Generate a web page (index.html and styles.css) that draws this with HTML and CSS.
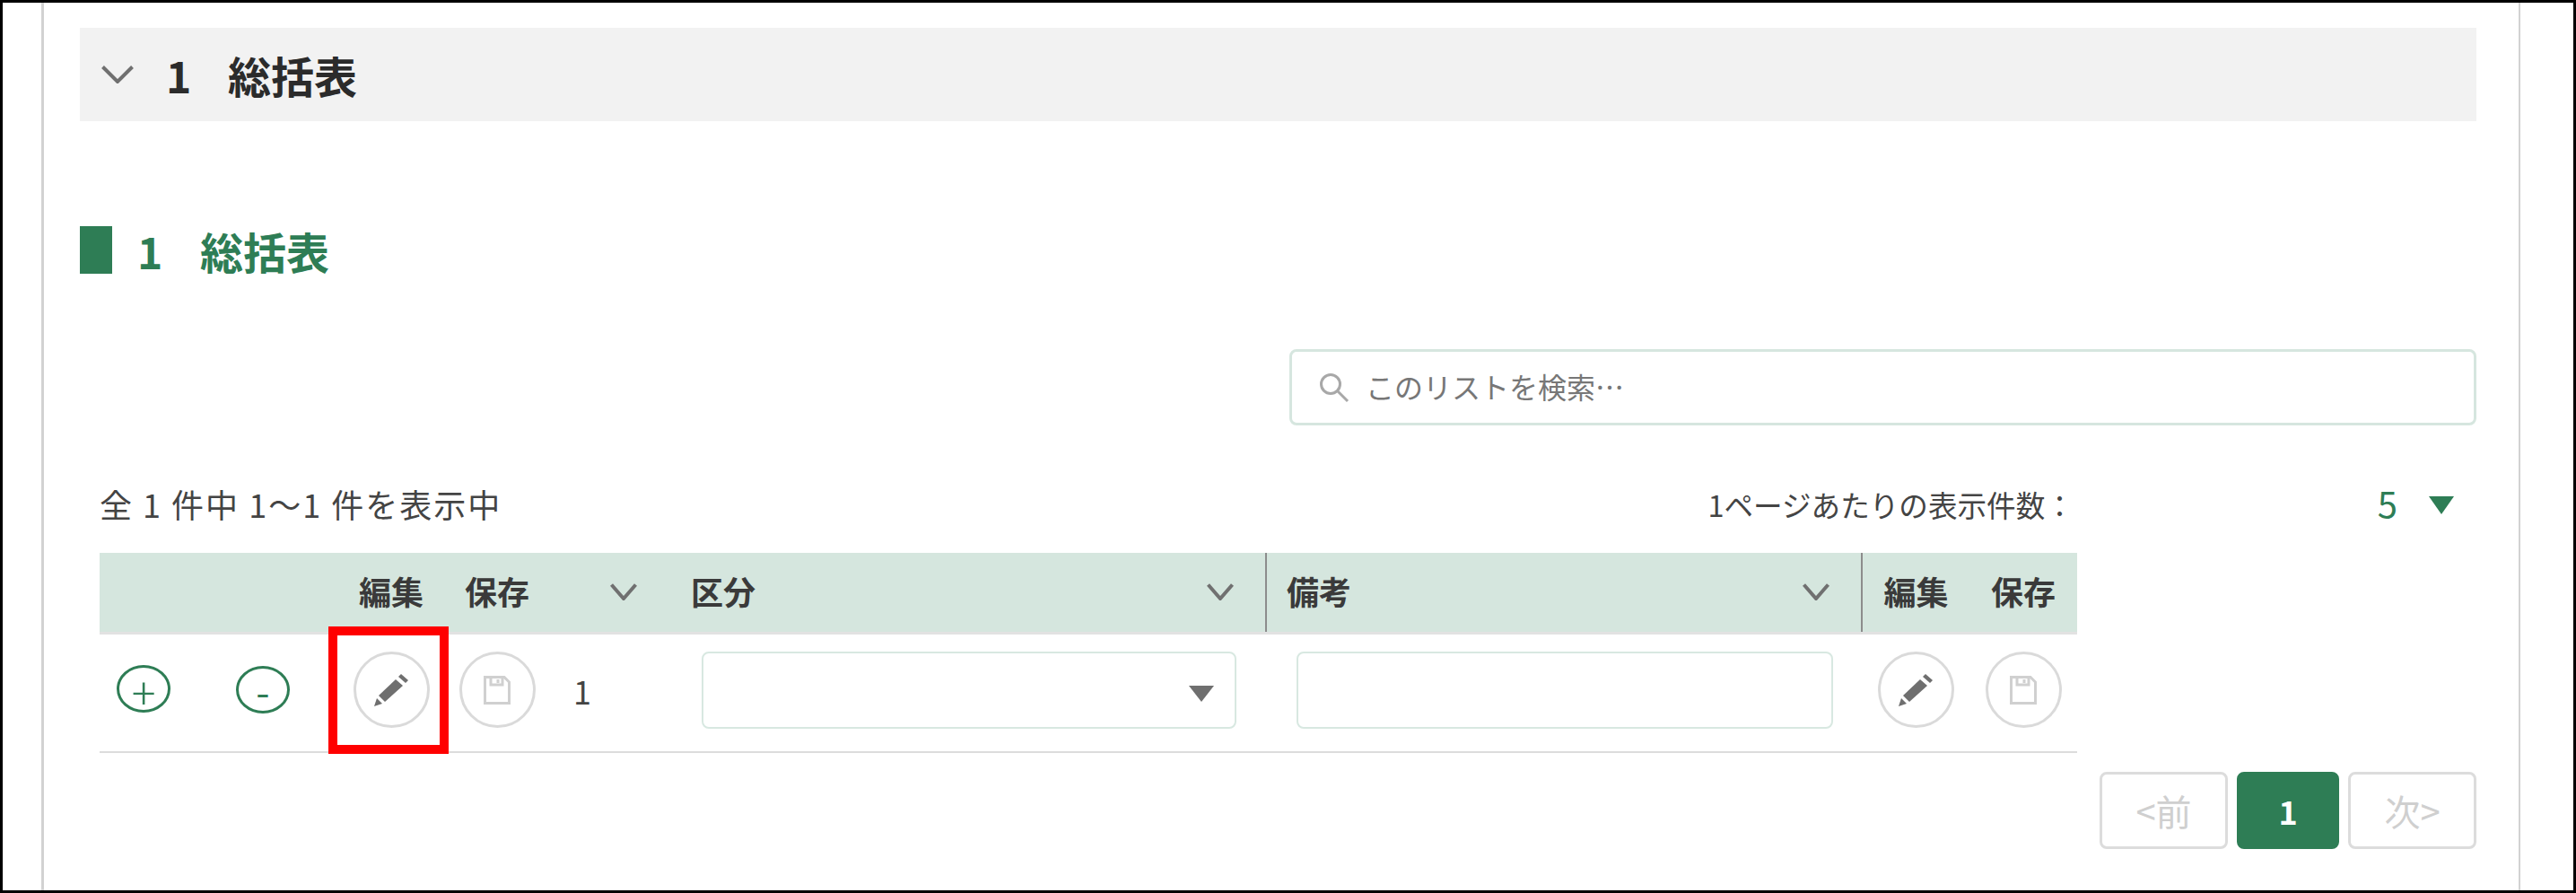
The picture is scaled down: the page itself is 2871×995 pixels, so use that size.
FILE: index.html
```html
<!DOCTYPE html>
<html>
<head>
    <title>総括表</title>
    <link rel="stylesheet" href="styles.css">
</head>
<body>
    <div class="frame">
        <div class="page">
            <div class="band">
                <svg class="band-chevron" viewBox="0 0 36 20"><polyline points="1.5,1.5 18,18 34.5,1.5" /></svg>
                <span class="band-no">1</span>
                <span>総括表</span>
            </div>

            <div class="section-head">
                <span class="section-bar"></span>
                <span class="section-no">1</span>
                <span>総括表</span>
            </div>

            <div class="search-box">
                <svg class="search-icon" viewBox="0 0 34 34"><circle cx="13" cy="13" r="10.5" /><line x1="21" y1="21" x2="32" y2="32" /></svg>
                <span class="search-text">このリストを検索…</span>
            </div>

            <div class="info-row">
                <div class="count">全 1 件中 1～1 件を表示中</div>
                <div class="per-label">1ページあたりの表示件数：</div>
                <div class="per-size">5</div>
                <span class="per-arrow"></span>
            </div>

            <table class="list">
                <colgroup>
                    <col class="col-add">
                    <col class="col-del">
                    <col class="col-btn">
                    <col class="col-btn">
                    <col class="col-no">
                    <col class="col-kubun">
                    <col class="col-note">
                    <col class="col-btn2">
                    <col class="col-btn2">
                </colgroup>
                <thead>
                    <tr>
                        <th></th>
                        <th></th>
                        <th class="center">編集</th>
                        <th class="center">保存</th>
                        <th>
                            <div class="th-inner th-end">
                                <svg class="th-chevron" viewBox="0 0 30 19"><polyline points="1.5,1.5 15,17 28.5,1.5" /></svg>
                            </div>
                        </th>
                        <th>
                            <div class="th-inner">
                                <span>区分</span>
                                <svg class="th-chevron" viewBox="0 0 30 19"><polyline points="1.5,1.5 15,17 28.5,1.5" /></svg>
                            </div>
                        </th>
                        <th class="divided">
                            <div class="th-inner">
                                <span>備考</span>
                                <svg class="th-chevron" viewBox="0 0 30 19"><polyline points="1.5,1.5 15,17 28.5,1.5" /></svg>
                            </div>
                        </th>
                        <th class="center divided">編集</th>
                        <th class="center">保存</th>
                    </tr>
                </thead>
                <tbody>
                    <tr>
                        <td class="center"><button class="ring ring-plus">+</button></td>
                        <td class="center"><button class="ring ring-minus">-</button></td>
                        <td class="center marked">
                            <button class="round">
                                <svg class="pencil" viewBox="0 0 38 36">
                                    <polygon points="0,36 3,27 9,33" />
                                    <polygon points="5,24 24,6 32,13 12,31" />
                                    <polygon points="27,3 30,0 38,7 35,10" />
                                </svg>
                            </button>
                            <span class="red-box"></span>
                        </td>
                        <td class="center">
                            <button class="round">
                                <svg class="floppy" viewBox="0 0 30 32">
                                    <path d="M1.5 1.5H23L28.5 7V30.5H1.5Z" />
                                    <path d="M8 2V10H21V2M16 4V8" />
                                </svg>
                            </button>
                        </td>
                        <td class="row-no">1</td>
                        <td class="field-kubun">
                            <div class="field">
                                <span class="select-arrow"></span>
                            </div>
                        </td>
                        <td class="field-note">
                            <div class="field"></div>
                        </td>
                        <td class="center">
                            <button class="round">
                                <svg class="pencil" viewBox="0 0 38 36">
                                    <polygon points="0,36 3,27 9,33" />
                                    <polygon points="5,24 24,6 32,13 12,31" />
                                    <polygon points="27,3 30,0 38,7 35,10" />
                                </svg>
                            </button>
                        </td>
                        <td class="center">
                            <button class="round">
                                <svg class="floppy" viewBox="0 0 30 32">
                                    <path d="M1.5 1.5H23L28.5 7V30.5H1.5Z" />
                                    <path d="M8 2V10H21V2M16 4V8" />
                                </svg>
                            </button>
                        </td>
                    </tr>
                </tbody>
            </table>

            <div class="pager">
                <div class="pager-item">&lt;前</div>
                <div class="pager-item current">1</div>
                <div class="pager-item">次&gt;</div>
            </div>
        </div>
    </div>
</body>
</html>
```

FILE: styles.css
```css
html, body {
    margin: 0;
    padding: 0;
}
body {
    font-family: "Noto Sans CJK JP", "Noto Sans", sans-serif;
    color: #333;
    background-color: #fff;
}
.frame {
    width: 2871px;
    height: 995px;
    box-sizing: border-box;
    border: 3px solid #000;
    padding-left: 43px;
    overflow: hidden;
}
.page {
    width: 2763px;
    height: 100%;
    box-sizing: border-box;
    border-left: 3px solid #d2d2d2;
    border-right: 2px solid #d2d2d2;
    padding: 28px 47px 0 40px;
}

.band {
    display: flex;
    align-items: center;
    height: 104px;
    padding-left: 24px;
    background-color: #f2f2f2;
    font-size: 48px;
    font-weight: bold;
    color: #2b2b2b;
}
.band-chevron {
    width: 36px;
    height: 20px;
    margin-right: 36px;
}
.band-chevron polyline {
    fill: none;
    stroke: #707070;
    stroke-width: 4;
}
.band-no {
    width: 69px;
}

.section-head {
    display: flex;
    align-items: center;
    height: 53px;
    margin-top: 117px;
    font-size: 48px;
    font-weight: bold;
    color: #2e7d55;
}
.section-bar {
    width: 36px;
    height: 53px;
    margin-right: 28px;
    background-color: #2e7d55;
}
.section-no {
    width: 70px;
}

.search-box {
    display: flex;
    align-items: center;
    width: 1323px;
    height: 85px;
    box-sizing: border-box;
    margin: 84px 0 0 auto;
    padding-left: 30px;
    border: 3px solid #d6e6df;
    border-radius: 8px;
    font-size: 32px;
    color: #777;
}
.search-icon {
    width: 34px;
    height: 34px;
    margin-right: 18px;
}
.search-icon circle,
.search-icon line {
    fill: none;
    stroke: #a8a8a8;
    stroke-width: 3;
}
.search-text {
    padding-bottom: 4px;
}

.info-row {
    display: flex;
    align-items: center;
    height: 36px;
    margin-top: 69px;
    padding-left: 22px;
    font-size: 36px;
    letter-spacing: 2px;
    color: #444;
}
.count {
    flex: 1;
}
.per-label {
    font-size: 32.6px;
    letter-spacing: 0;
}
.per-size {
    margin-left: 338px;
    padding-bottom: 3px;
    font-size: 40px;
    letter-spacing: 0;
    color: #2e7d55;
}
.per-arrow {
    width: 0;
    height: 0;
    margin: 4px 25px 0 35px;
    border-left: 14px solid transparent;
    border-right: 14px solid transparent;
    border-top: 20px solid #2e7d55;
}

.list {
    width: 2204px;
    margin: 37px 0 0 22px;
    border-collapse: collapse;
    table-layout: fixed;
}
.col-add { width: 98px; }
.col-del { width: 168px; }
.col-btn { width: 118px; }
.col-no { width: 139px; }
.col-kubun { width: 659px; }
.col-note { width: 664px; }
.col-btn2 { width: 120px; }

.list th {
    height: 89px;
    box-sizing: border-box;
    padding: 0 0 4px 0;
    background-color: #d5e6de;
    border-bottom: 3px solid #e2e2e2;
    font-size: 36px;
    font-weight: bold;
    color: #3a3a3a;
    text-align: left;
}
.list th.center,
.list td.center {
    text-align: center;
}
.list th.divided {
    border-left: 2px solid #8c8c8c;
}
.th-inner {
    display: flex;
    align-items: center;
    justify-content: space-between;
    padding: 0 35px 0 18px;
}
.th-end {
    justify-content: flex-end;
    padding-right: 42px;
}
.divided .th-inner {
    padding-left: 22px;
}
.th-chevron {
    width: 30px;
    height: 19px;
    margin-top: 4px;
}
.th-chevron polyline {
    fill: none;
    stroke: #707070;
    stroke-width: 4;
}

.list td {
    padding: 0 0 6px 0;
    box-sizing: border-box;
    border-bottom: 2px solid #dcdcdc;
}
.list tbody td {
    height: 133px;
}
.row-no {
    padding-left: 26px !important;
    font-size: 36px;
    color: #444;
}
.field-kubun {
    padding-left: 30px !important;
}
.field-note {
    padding-left: 34px !important;
}
.field {
    position: relative;
    width: 596px;
    height: 86px;
    box-sizing: border-box;
    border: 2px solid #d8e8e1;
    border-radius: 8px;
}
.field-note .field {
    width: 598px;
}
.select-arrow {
    position: absolute;
    top: 36px;
    right: 23px;
    width: 0;
    height: 0;
    border-left: 14.5px solid transparent;
    border-right: 14.5px solid transparent;
    border-top: 18px solid #6f6f6f;
}

.ring {
    width: 60px;
    height: 53px;
    padding: 0;
    border: 3px solid #2e7d55;
    border-radius: 50%;
    background: none;
    font-family: inherit;
    line-height: 1;
    color: #2e7d55;
}
.ring-plus {
    font-size: 50px;
    font-weight: 300;
}
.ring-minus {
    font-size: 44px;
}
.round {
    display: inline-flex;
    align-items: center;
    justify-content: center;
    width: 85px;
    height: 85px;
    padding: 0;
    border: 3px solid #dadada;
    border-radius: 50%;
    background: none;
    vertical-align: middle;
}
.pencil {
    width: 38px;
    height: 36px;
    fill: #6f6f6f;
}
.floppy {
    width: 30px;
    height: 32px;
    fill: none;
    stroke: #d0d0d0;
    stroke-width: 3;
}
.marked {
    position: relative;
}
.red-box {
    position: absolute;
    top: -9px;
    left: -11px;
    width: 134px;
    height: 142px;
    box-sizing: border-box;
    border: 10px solid #f00;
}

.pager {
    display: flex;
    justify-content: flex-end;
    gap: 10px;
    margin-top: 21px;
}
.pager-item {
    display: flex;
    align-items: center;
    justify-content: center;
    width: 143px;
    height: 86px;
    box-sizing: border-box;
    border: 3px solid #dcdcdc;
    border-radius: 8px;
    font-size: 40px;
    color: #cfcfcf;
}
.pager-item.current {
    width: 114px;
    border-color: #2e7d55;
    background-color: #2e7d55;
    font-size: 36px;
    font-weight: bold;
    color: #fff;
}
```
